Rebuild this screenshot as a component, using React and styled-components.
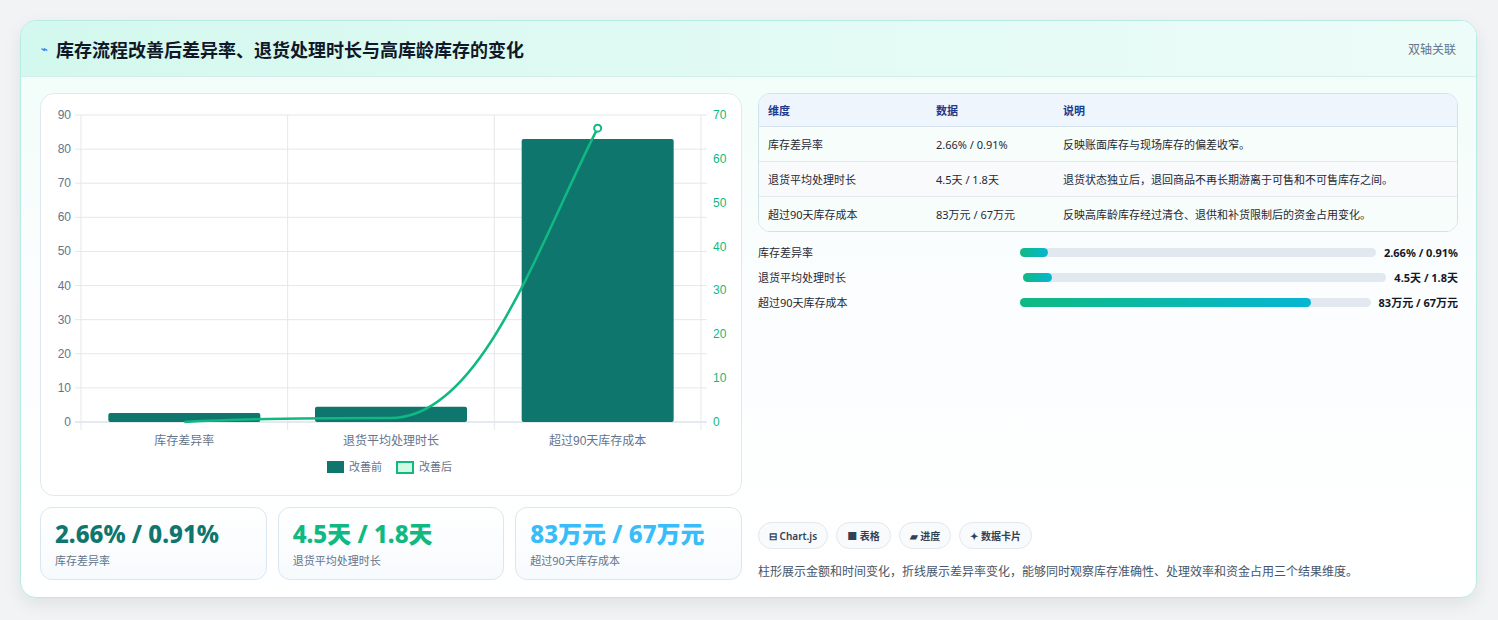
import React from "react";
import styled, { createGlobalStyle } from "styled-components";

const Global = createGlobalStyle`
  body { margin: 0; background: #f1f3f4; font-family: "Noto Sans", "Noto Sans CJK SC", sans-serif; }
`;

const Page = styled.div`
  padding: 20px 21px 22px 20px;
`;

const Card = styled.div`
  background: linear-gradient(180deg, #f0fdf8 0%, #fbfdfe 45%, #ffffff 100%);
  border: 1px solid #b7ece3;
  border-radius: 16px;
  box-shadow: 0 6px 18px rgba(15, 23, 42, 0.08);
  overflow: hidden;
`;

const Header = styled.div`
  height: 55px;
  display: flex;
  align-items: center;
  justify-content: space-between;
  padding: 0 20px;
  background: linear-gradient(90deg, #d3f8ee 0%, #e4fbf5 60%, #edfcf8 100%);
  border-bottom: 1px solid #d3ede9;
`;

const Title = styled.h1`
  margin: 0;
  font-size: 18px;
  font-weight: 700;
  color: #111827;
  display: flex;
  align-items: center;
  gap: 8px;
`;

const Bolt = styled.span`
  color: #3b82f6;
  font-size: 11px;
`;

const Tag = styled.span`
  font-size: 12px;
  color: #64748b;
`;

const Body = styled.div`
  display: grid;
  grid-template-columns: 702px 1fr;
  gap: 16px;
  padding: 16px 18px 17px 19px;
`;

const LeftCol = styled.div`
  display: flex;
  flex-direction: column;
  gap: 11px;
`;

const ChartPanel = styled.div`
  height: 403px;
  background: #fff;
  border: 1px solid #e2e8f0;
  border-radius: 14px;
  box-sizing: border-box;
`;

const KpiRow = styled.div`
  display: grid;
  grid-template-columns: repeat(3, 1fr);
  gap: 11px;
`;

const Kpi = styled.div`
  height: 73px;
  box-sizing: border-box;
  border: 1px solid #dbe6f3;
  border-radius: 12px;
  background: linear-gradient(180deg, #ffffff, #f7fafd);
  padding: 10px 14px;
`;

const KpiValue = styled.div`
  font-size: 24px;
  font-weight: 800;
  line-height: 32px;
  color: ${(p) => p.color};
`;

const KpiLabel = styled.div`
  font-size: 11px;
  color: #64748b;
  margin-top: 2px;
`;

const RightCol = styled.div`
  display: flex;
  flex-direction: column;
`;

const TableBox = styled.div`
  border: 1px solid #cfe3ea;
  border-radius: 12px;
  overflow: hidden;
  background: #fff;
`;

const Table = styled.table`
  width: 100%;
  border-collapse: collapse;
  font-size: 11px;
`;

const Th = styled.th`
  text-align: left;
  font-weight: 700;
  color: #1e3a8a;
  background: #eef5fd;
  height: 32px;
  padding: 0 9px;
  border-bottom: 1px solid #d6e2ee;
`;

const Td = styled.td`
  height: 34px;
  padding: 0 9px;
  color: #1f2937;
  background: ${(p) => (p.alt ? "#f8fafc" : "#f6fdfa")};
  border-top: ${(p) => (p.first ? "none" : "1px solid #e5eaf0")};
`;

const Bars = styled.div`
  display: flex;
  flex-direction: column;
  gap: 9px;
  margin-top: 12px;
`;

const BarRow = styled.div`
  display: flex;
  align-items: center;
  font-size: 11px;
  color: #1f2937;
  height: 16px;
`;

const BarLabel = styled.span`
  flex: 1;
`;

const Track = styled.div`
  width: ${(p) => p.w}px;
  height: 9px;
  border-radius: 5px;
  background: #e2e8f0;
  margin-right: 8px;
`;

const Fill = styled.div`
  height: 100%;
  border-radius: 5px;
  background: linear-gradient(90deg, #10b981, #06b6d4);
`;

const BarValue = styled.span`
  font-weight: 700;
  color: #111827;
`;

const Chips = styled.div`
  display: flex;
  gap: 8px;
  margin-top: auto;
`;

const Chip = styled.span`
  height: 27px;
  box-sizing: border-box;
  display: inline-flex;
  align-items: center;
  padding: 0 10px;
  border: 1px solid #e2e8f0;
  border-radius: 14px;
  background: #f8fafc;
  font-size: 10px;
  font-weight: 600;
  color: #334155;
  gap: 3px;
`;

const Desc = styled.p`
  margin: 13px 0 0;
  font-size: 12px;
  color: #475569;
`;

const rows = [
  ["库存差异率", "2.66% / 0.91%", "反映账面库存与现场库存的偏差收窄。"],
  ["退货平均处理时长", "4.5天 / 1.8天", "退货状态独立后，退回商品不再长期游离于可售和不可售库存之间。"],
  ["超过90天库存成本", "83万元 / 67万元", "反映高库龄库存经过清仓、退供和补货限制后的资金占用变化。"],
];

const progress = [
  ["库存差异率", 356, 8, "2.66% / 0.91%"],
  ["退货平均处理时长", 363, 8, "4.5天 / 1.8天"],
  ["超过90天库存成本", 351, 83, "83万元 / 67万元"],
];

function Chart() {
  const x0 = 40, x1 = 660, yb = 328, yt = 21;
  const h = yb - yt;
  const ly = (v) => yb - (v / 90) * h;
  const ry = (v) => yb - (v / 70) * h;
  const cw = (x1 - x0) / 3;
  const before = [2.66, 4.5, 83];
  const after = [0.91, 1.8, 67];
  const cx = [0, 1, 2].map((i) => x0 + cw * i + cw / 2);
  const labels = ["库存差异率", "退货平均处理时长", "超过90天库存成本"];
  const t = { fontSize: 12, fill: "#64748b", fontFamily: "Liberation Sans, Noto Sans CJK SC, sans-serif" };
  return (
    <svg width="700" height="401" viewBox="0 0 700 401">
      {Array.from({ length: 10 }, (_, i) => (
        <g key={i}>
          <line x1={x0 - 6} x2={x1 + 6} y1={ly(i * 10)} y2={ly(i * 10)} stroke={i === 0 ? "#cbd5e1" : "#e5e7eb"} />
          <text {...t} x={x0 - 10} y={ly(i * 10) + 4} textAnchor="end">{i * 10}</text>
        </g>
      ))}
      {Array.from({ length: 8 }, (_, i) => (
        <text key={i} {...t} fill="#10b981" x={x1 + 12} y={ry(i * 10) + 4}>{i * 10}</text>
      ))}
      {[0, 1, 2, 3].map((i) => (
        <line key={i} x1={x0 + cw * i} x2={x0 + cw * i} y1={yt} y2={yb + 8} stroke="#e5e7eb" />
      ))}
      {before.map((v, i) => (
        <rect key={i} x={cx[i] - 76} width="152" y={ly(v)} height={yb - ly(v)} rx="2" fill="#0f766e" />
      ))}
      <path
        d={`M${cx[0]},${yb} C${cx[0] + 70},${ry(after[0])} ${cx[1] - 70},${ry(after[0])} ${cx[1]},${ry(after[0])} C${cx[1] + 90},${ry(after[0])} ${cx[2] - 60},${ry(40)} ${cx[2]},${ry(after[2])}`}
        fill="none"
        stroke="#10b981"
        strokeWidth="2.5"
      />
      <circle cx={cx[2]} cy={ry(after[2])} r="3.5" fill="#fff" stroke="#10b981" strokeWidth="2" />
      {labels.map((l, i) => (
        <text key={l} {...t} x={cx[i]} y={yb + 23} textAnchor="middle">{l}</text>
      ))}
      <rect x="286" y="367" width="17" height="12" fill="#0f766e" />
      <text {...t} fontSize="11" x="308" y="377">改善前</text>
      <rect x="356" y="368" width="16" height="11" fill="#d1fae5" stroke="#10b981" strokeWidth="2" />
      <text {...t} fontSize="11" x="378" y="377">改善后</text>
    </svg>
  );
}

export default function App() {
  return (
    <Page>
      <Global />
      <Card>
        <Header>
          <Title><Bolt>⌁</Bolt>库存流程改善后差异率、退货处理时长与高库龄库存的变化</Title>
          <Tag>双轴关联</Tag>
        </Header>
        <Body>
          <LeftCol>
            <ChartPanel><Chart /></ChartPanel>
            <KpiRow>
              <Kpi><KpiValue color="#0f766e">2.66% / 0.91%</KpiValue><KpiLabel>库存差异率</KpiLabel></Kpi>
              <Kpi><KpiValue color="#10b981">4.5天 / 1.8天</KpiValue><KpiLabel>退货平均处理时长</KpiLabel></Kpi>
              <Kpi><KpiValue color="#38bdf8">83万元 / 67万元</KpiValue><KpiLabel>超过90天库存成本</KpiLabel></Kpi>
            </KpiRow>
          </LeftCol>
          <RightCol>
            <TableBox>
              <Table>
                <thead>
                  <tr><Th style={{ width: 150 }}>维度</Th><Th style={{ width: 109 }}>数据</Th><Th>说明</Th></tr>
                </thead>
                <tbody>
                  {rows.map((r, i) => (
                    <tr key={r[0]}>
                      {r.map((c) => <Td key={c} alt={i === 1} first={i === 0}>{c}</Td>)}
                    </tr>
                  ))}
                </tbody>
              </Table>
            </TableBox>
            <Bars>
              {progress.map(([l, w, pct, v]) => (
                <BarRow key={l}>
                  <BarLabel>{l}</BarLabel>
                  <Track w={w}><Fill style={{ width: `${pct}%` }} /></Track>
                  <BarValue>{v}</BarValue>
                </BarRow>
              ))}
            </Bars>
            <Chips>
              <Chip>⊟ Chart.js</Chip>
              <Chip>■ 表格</Chip>
              <Chip>▰ 进度</Chip>
              <Chip>✦ 数据卡片</Chip>
            </Chips>
            <Desc>柱形展示金额和时间变化，折线展示差异率变化，能够同时观察库存准确性、处理效率和资金占用三个结果维度。</Desc>
          </RightCol>
        </Body>
      </Card>
    </Page>
  );
}
